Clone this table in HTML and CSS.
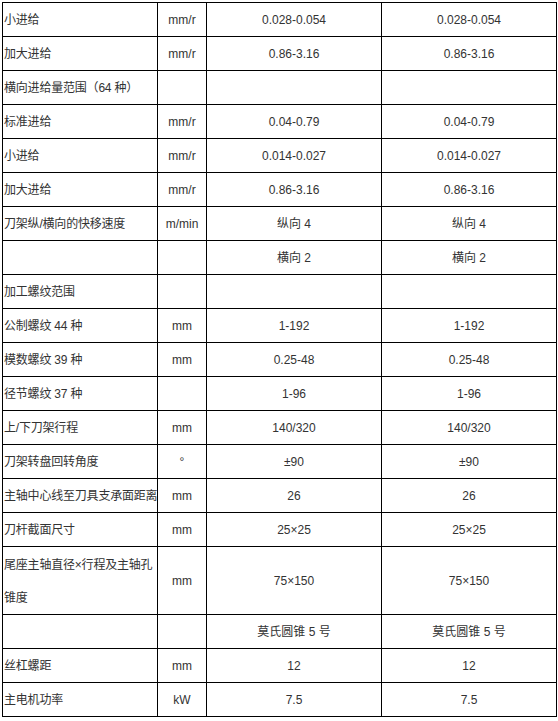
FILE: index.html
```html
<!DOCTYPE html>
<html lang="zh-CN">
<head>
<meta charset="utf-8">
<title>参数表</title>
<link rel="stylesheet" href="styles.css">
</head>
<body>
<table class="spec">
  <colgroup>
    <col class="c-name">
    <col class="c-unit">
    <col class="c-val">
    <col class="c-val2">
  </colgroup>
  <tbody>
    <tr><td class="name">小进给</td><td>mm/r</td><td>0.028-0.054</td><td>0.028-0.054</td></tr>
    <tr><td class="name">加大进给</td><td>mm/r</td><td>0.86-3.16</td><td>0.86-3.16</td></tr>
    <tr><td class="name">横向进给量范围（64 种）</td><td></td><td></td><td></td></tr>
    <tr><td class="name">标准进给</td><td>mm/r</td><td>0.04-0.79</td><td>0.04-0.79</td></tr>
    <tr><td class="name">小进给</td><td>mm/r</td><td>0.014-0.027</td><td>0.014-0.027</td></tr>
    <tr><td class="name">加大进给</td><td>mm/r</td><td>0.86-3.16</td><td>0.86-3.16</td></tr>
    <tr><td class="name">刀架纵/横向的快移速度</td><td>m/min</td><td>纵向 4</td><td>纵向 4</td></tr>
    <tr><td class="name"></td><td></td><td>横向 2</td><td>横向 2</td></tr>
    <tr><td class="name">加工螺纹范围</td><td></td><td></td><td></td></tr>
    <tr><td class="name">公制螺纹 44 种</td><td>mm</td><td>1-192</td><td>1-192</td></tr>
    <tr><td class="name">模数螺纹 39 种</td><td>mm</td><td>0.25-48</td><td>0.25-48</td></tr>
    <tr><td class="name">径节螺纹 37 种</td><td></td><td>1-96</td><td>1-96</td></tr>
    <tr><td class="name">上/下刀架行程</td><td>mm</td><td>140/320</td><td>140/320</td></tr>
    <tr><td class="name">刀架转盘回转角度</td><td>°</td><td>±90</td><td>±90</td></tr>
    <tr><td class="name">主轴中心线至刀具支承面距离</td><td>mm</td><td>26</td><td>26</td></tr>
    <tr><td class="name">刀杆截面尺寸</td><td>mm</td><td>25×25</td><td>25×25</td></tr>
    <tr><td class="name tall">尾座主轴直径×行程及主轴孔<br>锥度</td><td>mm</td><td>75×150</td><td>75×150</td></tr>
    <tr><td class="name"></td><td></td><td>莫氏圆锥 5 号</td><td>莫氏圆锥 5 号</td></tr>
    <tr><td class="name">丝杠螺距</td><td>mm</td><td>12</td><td>12</td></tr>
    <tr><td class="name">主电机功率</td><td>kW</td><td>7.5</td><td>7.5</td></tr>
  </tbody>
</table>
</body>
</html>
```

FILE: styles.css
```css
html, body {
  margin: 0;
  padding: 0;
  background: #ffffff;
}

body {
  padding: 2px 0 0 2px;
  font-family: "Liberation Sans", "Noto Sans CJK SC", sans-serif;
  font-size: 12px;
  color: #333333;
}

.spec {
  border-collapse: collapse;
  table-layout: fixed;
  width: 554px;
}

.c-name { width: 155px; }
.c-unit { width: 49px; }
.c-val { width: 175px; }
.c-val2 { width: 175px; }

.spec td {
  border: 1px solid #000000;
  padding: 2px 0 0 0;
  line-height: 31px;
  height: 31px;
  text-align: center;
  vertical-align: middle;
  white-space: nowrap;
}

.spec td.name {
  text-align: left;
  padding-left: 1px;
  letter-spacing: -0.2px;
}

.spec td.tall {
  line-height: 32.5px;
}
```
